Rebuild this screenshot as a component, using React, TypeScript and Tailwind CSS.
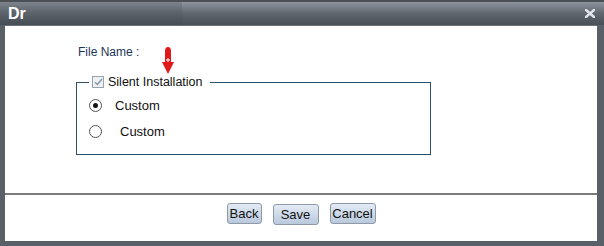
import React from "react";

const DialogButton = ({ label, className }: { label: string; className: string }) => (
  <button
    className={`h-[21px] rounded-[3px] border border-[#8d99a6] bg-gradient-to-b from-[#e3ebf5] to-[#b9c9dc] text-[13px] text-[#111] leading-none ${className}`}
  >
    {label}
  </button>
);

const Radio = ({ checked }: { checked?: boolean }) => (
  <span className="w-[13px] h-[13px] rounded-full border border-[#555] bg-white flex items-center justify-center">
    {checked && <span className="w-[5px] h-[5px] rounded-full bg-[#111]" />}
  </span>
);

export default function App() {
  return (
    <div className="relative w-[604px] h-[246px] bg-[#596068] font-['Liberation_Sans',Arial,sans-serif] overflow-hidden">
      {/* title bar */}
      <div className="h-[25px] flex border-t-2 border-[#4b5057]">
        <div className="w-[182px] h-full bg-gradient-to-b from-[#7d848c] via-[#5a6168] to-[#474d54] flex items-center pl-[8px]">
          <span className="text-white font-bold text-[16px] leading-none">Dr</span>
        </div>
        <div className="flex-1 h-full bg-gradient-to-b from-[#8e959d] via-[#5f666d] to-[#4a5057] flex items-center justify-end pr-[9px]">
          <svg width="10" height="9" viewBox="0 0 10 9">
            <path d="M1 1 L9 8 M9 1 L1 8" stroke="#e2e6ea" strokeWidth="2.4" strokeLinecap="square" />
          </svg>
        </div>
      </div>

      {/* body */}
      <div className="ml-[5px] mr-[7px] h-[216px] bg-white border-t border-[#6d737a] flex flex-col">
        <div className="h-[167px] relative pl-[71px] pt-[19px]">
          <div className="pl-[2px] text-[12px] text-[#1d3557] leading-[14px]">File Name :</div>

          <fieldset className="mt-[16px] w-[355px] h-[80px] border border-[#2f5068] pl-[12px]">
            <legend className="px-[3px] pr-[7px] flex items-center gap-[4px]">
              <span className="w-[12px] h-[12px] border border-[#9aa3ad] bg-[#eef1f4] flex items-center justify-center">
                <svg width="9" height="8" viewBox="0 0 9 8">
                  <path d="M1 4.2 L3.4 6.5 L8 1" fill="none" stroke="#8a97a6" strokeWidth="1.5" />
                </svg>
              </span>
              <span className="text-[12.5px] text-[#111] leading-[14px]">Silent Installation</span>
            </legend>
            <div className="flex flex-col gap-[13px] pt-[10px]">
              <label className="flex items-center gap-[13px] h-[13px]">
                <Radio checked />
                <span className="text-[13px] text-[#111]">Custom</span>
              </label>
              <label className="flex items-center gap-[18px] h-[13px]">
                <Radio />
                <span className="text-[13px] text-[#111]">Custom</span>
              </label>
            </div>
          </fieldset>

          {/* red arrow marker */}
          <svg className="absolute left-[157px] top-[21px]" width="12" height="27" viewBox="0 0 12 27">
            <path d="M3 4 Q3 0 6 0 Q9 0 9 4 L9 15 L12 15 L6 27 L0 15 L3 15 Z" fill="#e01a1a" />
            <path d="M6 11 V15 M4 13 H8" stroke="#ffffff" strokeWidth="1" />
          </svg>
        </div>

        <div className="border-t-2 border-[#7a7a7a]" />

        <div className="flex justify-center gap-[11px] pt-[8px]">
          <DialogButton label="Back" className="w-[35px]" />
          <DialogButton label="Save" className="w-[46px] mt-[1px]" />
          <DialogButton label="Cancel" className="w-[46px]" />
        </div>
      </div>
    </div>
  );
}
